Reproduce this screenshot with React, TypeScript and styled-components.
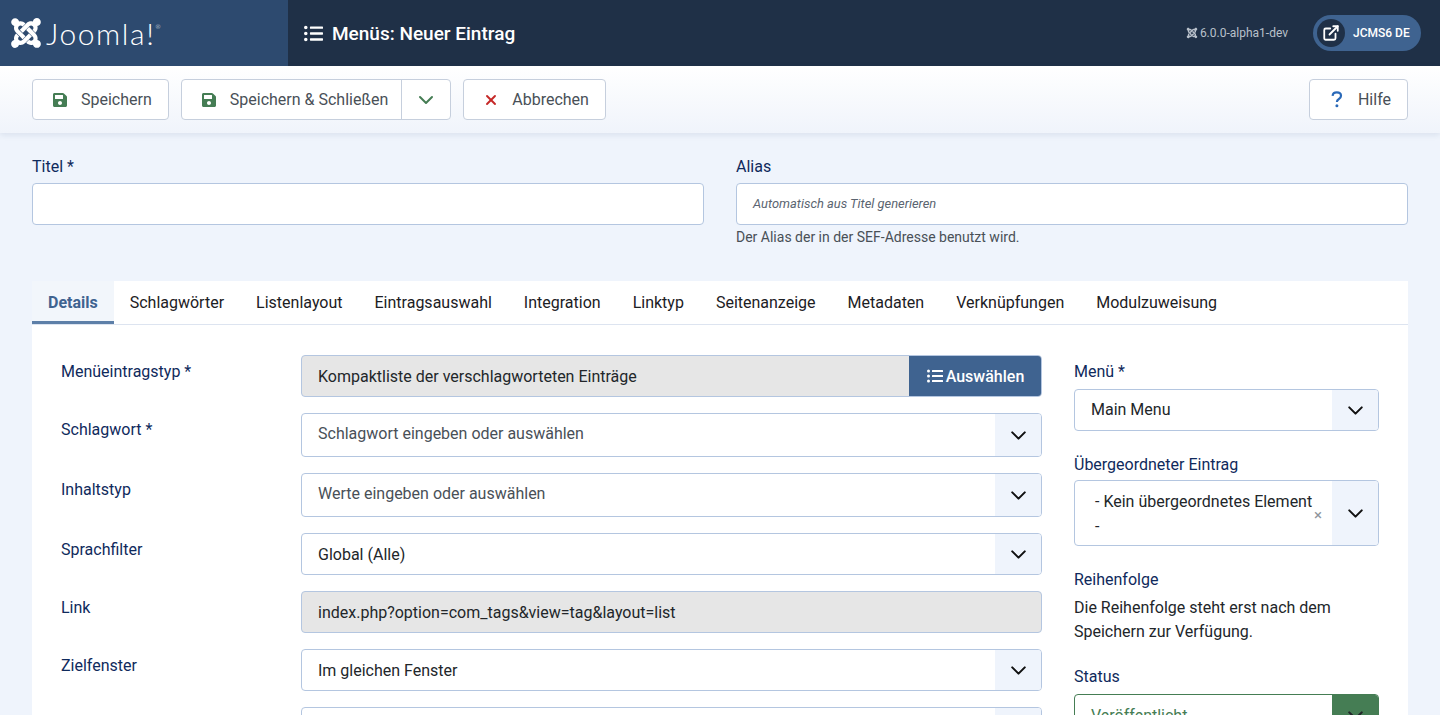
import { ReactNode } from 'react'

import styled, { createGlobalStyle } from 'styled-components'

import { FaJoomla, FaListUl, FaSave } from 'react-icons/fa'
import { ChevronDown, ExternalLink, X } from 'lucide-react'

const GlobalStyle = createGlobalStyle`
  html, body {
    margin: 0;
    height: 100%;
    overflow: hidden;
    background: #eff4fc;
    font-family: Roboto, "Liberation Sans", sans-serif;
    font-size: 16px;
    color: #22262a;
  }
  * {
    box-sizing: border-box;
  }
`

const Page = styled.div`
  height: 715px;
  overflow: hidden;
`
const Header = styled.header`
  display: flex;
  align-items: center;
  height: 66px;
  background: #1f3047;
  color: #fff;
`
const Brand = styled.div`
  display: flex;
  align-items: center;
  gap: 3px;
  width: 288px;
  height: 100%;
  padding-left: 9px;
  background: #2d4a6f;
`
const BrandName = styled.span`
  font-family: Lato, sans-serif;
  font-weight: 300;
  font-size: 30px;
  letter-spacing: 1.6px;
  sup {
    font-size: 6px;
    vertical-align: 16px;
    letter-spacing: 0;
  }
`
const PageTitle = styled.h1`
  display: flex;
  align-items: center;
  gap: 9px;
  flex: 1;
  margin: 0;
  padding-left: 16px;
  font-size: 19px;
  font-weight: 500;
`
const Version = styled.div`
  display: flex;
  align-items: center;
  gap: 2px;
  margin-right: 25px;
  font-size: 12px;
  color: #b9c1cb;
`
const SitePill = styled.div`
  display: flex;
  align-items: center;
  width: 108px;
  height: 36px;
  margin-right: 19px;
  padding-left: 4px;
  border-radius: 18px;
  background: #3f6390;
  font-size: 12px;
  font-weight: 500;
`
const SiteIcon = styled.span`
  display: flex;
  align-items: center;
  justify-content: center;
  width: 28px;
  height: 28px;
  margin-right: 8px;
  border-radius: 50%;
  background: #1f3047;
`
const Toolbar = styled.div`
  display: flex;
  align-items: center;
  gap: 12px;
  height: 67px;
  padding: 0 32px;
  background: linear-gradient(#fff, #f0f4fb);
  box-shadow: 0 2px 6px rgba(30, 60, 110, 0.1);
`
const ToolButton = styled.div`
  display: flex;
  align-items: center;
  height: 41px;
  background: #fff;
  border: 1px solid #c6cfdd;
  border-radius: 4px;
  color: #495057;
  font-size: 16px;
`
const ButtonPart = styled.span<{ $padRight?: number }>`
  display: flex;
  align-items: center;
  height: 100%;
  padding: 0 ${(p) => p.$padRight ?? 16}px 0 19px;
`
const ButtonIcon = styled.span<{ $color: string }>`
  display: flex;
  align-items: center;
  justify-content: center;
  width: 16px;
  margin-right: 13px;
  color: ${(p) => p.$color};
`
const CaretPart = styled.span`
  display: flex;
  align-items: center;
  justify-content: center;
  width: 49px;
  height: 100%;
  border-left: 1px solid #c6cfdd;
  color: #457d54;
`
const Spacer = styled.div`
  flex: 1;
`
const TitleRow = styled.div`
  display: grid;
  grid-template-columns: 672px 672px;
  gap: 32px;
  padding: 24px 32px 0;
  height: 148px;
`
const Label = styled.label`
  display: block;
  color: #0f2a5c;
  font-size: 16px;
  line-height: 19px;
`
const TopInput = styled.div`
  display: flex;
  align-items: center;
  height: 42px;
  margin-top: 7px;
  padding: 0 16px 2px;
  background: #fff;
  border: 1px solid #b4c6e0;
  border-radius: 4px;
  font-size: 12.9px;
  font-style: italic;
  color: #5a6470;
`
const Hint = styled.div`
  margin-top: 4px;
  font-size: 14px;
  line-height: 17px;
  color: #495057;
`
const Card = styled.section`
  margin: 0 32px;
  background: #fff;
`
const Tabs = styled.nav`
  display: flex;
  height: 44px;
  border-bottom: 1px solid #dde4f0;
`
const Tab = styled.div<{ $active?: boolean }>`
  display: flex;
  align-items: center;
  padding: 0 16px;
  font-size: 16px;
  font-weight: ${(p) => (p.$active ? 700 : 400)};
  color: ${(p) => (p.$active ? '#3f6390' : '#1c2024')};
  background: ${(p) => (p.$active ? '#f2f6fb' : 'transparent')};
  box-shadow: ${(p) => (p.$active ? 'inset 0 -3px 0 #5d7fa8' : 'none')};
`
const FormBody = styled.div`
  display: grid;
  grid-template-columns: 741px 305px;
  gap: 32px;
  padding: 30px 0 0 269px;
`
const FieldColumn = styled.div`
  display: flex;
  flex-direction: column;
`
const Row = styled.div<{ $height: number }>`
  display: flex;
  height: ${(p) => p.$height}px;
  margin-left: -240px;
`
const RowLabel = styled.div`
  flex: 0 0 240px;
  padding-top: 7px;
  color: #0f2a5c;
  font-size: 16px;
  line-height: 19px;
`
const Field = styled.div<{ $readOnly?: boolean; $height?: number; $muted?: boolean; $state?: string }>`
  display: flex;
  align-items: center;
  flex: 1 0 auto;
  height: ${(p) => p.$height ?? 42}px;
  background: ${(p) => (p.$readOnly ? '#e6e6e6' : '#fff')};
  border: 1px solid ${(p) => p.$state ?? '#b4c6e0'};
  border-radius: 4px;
  overflow: hidden;
  color: ${(p) => (p.$state ? p.$state : p.$muted ? '#495057' : '#22262a')};
  font-size: 16px;
`
const SideField = styled(Field)`
  flex: 0 0 auto;
`
const FieldText = styled.span<{ $raise?: number; $lower?: number }>`
  flex: 1;
  padding: ${(p) => p.$lower ?? 0}px 0 ${(p) => p.$raise ?? 0}px 16px;
`
const Caret = styled.span<{ $filled?: string }>`
  display: flex;
  align-items: center;
  justify-content: center;
  flex: 0 0 46px;
  height: 100%;
  background: ${(p) => p.$filled ?? '#eff4fc'};
  color: ${(p) => (p.$filled ? '#22262a' : '#111')};
`
const SelectButton = styled.div`
  display: flex;
  align-items: center;
  justify-content: center;
  gap: 3px;
  flex: 0 0 133px;
  height: 42px;
  margin: -1px;
  background: #3f6390;
  color: #fff;
  font-weight: 500;
  font-size: 16px;
  border-radius: 0 4px 4px 0;
`
const SideColumn = styled.aside`
  display: flex;
  flex-direction: column;
`
const SideLabel = styled(Label)<{ $top?: number; $bottom?: number }>`
  margin-top: ${(p) => p.$top ?? 0}px;
  margin-bottom: ${(p) => p.$bottom ?? 8}px;
`
const ParentText = styled.div`
  position: relative;
  flex: 1;
  padding: 2px 16px 0 20px;
  line-height: 25px;
`
const ClearMark = styled.span`
  position: absolute;
  right: 10px;
  top: 19px;
  color: #8f959c;
  font-size: 15px;
  line-height: 18px;
`
const Note = styled.p`
  margin: -1px 0 0;
  font-size: 16px;
  line-height: 24px;
  color: #22262a;
`

const tabs = [
  'Details',
  'Schlagwörter',
  'Listenlayout',
  'Eintragsauswahl',
  'Integration',
  'Linktyp',
  'Seitenanzeige',
  'Metadaten',
  'Verknüpfungen',
  'Modulzuweisung',
]

const QuestionIcon = () => (
  <svg width="12" height="17" viewBox="0 0 12 17" fill="none">
    <path
      d="M1.6 4.8C1.8 2.7 3.5 1.4 5.8 1.4c2.5 0 4.2 1.4 4.2 3.4 0 1.5-.8 2.4-2.1 3.2-1.3.8-2 1.5-2 3"
      stroke="currentColor"
      strokeWidth="2.2"
    />
    <circle cx="5.9" cy="14.8" r="1.5" fill="currentColor" />
  </svg>
)

type SelectRowProps = {
  label: string
  height: number
  fieldHeight?: number
  muted?: boolean
  children: ReactNode
}
const SelectRow = ({ label, height, fieldHeight, muted, children }: SelectRowProps) => (
  <Row $height={height}>
    <RowLabel>{label}</RowLabel>
    <Field $height={fieldHeight} $muted={muted}>
      <FieldText $raise={muted ? 4 : 0}>{children}</FieldText>
      <Caret>
        <ChevronDown size={25} strokeWidth={2} />
      </Caret>
    </Field>
  </Row>
)

export default function App() {
  return (
    <Page>
      <GlobalStyle />
      <Header>
        <Brand>
          <FaJoomla size={34} />
          <BrandName>
            Joomla!<sup>®</sup>
          </BrandName>
        </Brand>
        <PageTitle>
          <FaListUl size={19} />
          Menüs: Neuer Eintrag
        </PageTitle>
        <Version>
          <FaJoomla size={12} />
          6.0.0-alpha1-dev
        </Version>
        <SitePill>
          <SiteIcon>
            <ExternalLink size={18} strokeWidth={2.4} />
          </SiteIcon>
          JCMS6 DE
        </SitePill>
      </Header>
      <Toolbar>
        <ToolButton>
          <ButtonPart>
            <ButtonIcon $color="#457d54">
              <FaSave size={16} />
            </ButtonIcon>
            Speichern
          </ButtonPart>
        </ToolButton>
        <ToolButton>
          <ButtonPart $padRight={13}>
            <ButtonIcon $color="#457d54">
              <FaSave size={16} />
            </ButtonIcon>
            Speichern &amp; Schließen
          </ButtonPart>
          <CaretPart>
            <ChevronDown size={24} strokeWidth={2} />
          </CaretPart>
        </ToolButton>
        <ToolButton>
          <ButtonPart>
            <ButtonIcon $color="#c52827">
              <X size={20} strokeWidth={2.8} />
            </ButtonIcon>
            Abbrechen
          </ButtonPart>
        </ToolButton>
        <Spacer />
        <ToolButton>
          <ButtonPart>
            <ButtonIcon $color="#2a69b8">
              <QuestionIcon />
            </ButtonIcon>
            Hilfe
          </ButtonPart>
        </ToolButton>
      </Toolbar>
      <TitleRow>
        <div>
          <Label>Titel *</Label>
          <TopInput />
        </div>
        <div>
          <Label>Alias</Label>
          <TopInput>Automatisch aus Titel generieren</TopInput>
          <Hint>Der Alias der in der SEF-Adresse benutzt wird.</Hint>
        </div>
      </TitleRow>
      <Card>
        <Tabs>
          {tabs.map((tab, idx) => (
            <Tab key={tab} $active={idx === 0}>
              {tab}
            </Tab>
          ))}
        </Tabs>
        <FormBody>
          <FieldColumn>
            <Row $height={58}>
              <RowLabel>Menüeintragstyp *</RowLabel>
              <Field $readOnly>
                <FieldText $lower={1}>Kompaktliste der verschlagworteten Einträge</FieldText>
                <SelectButton>
                  <FaListUl size={16} />
                  Auswählen
                </SelectButton>
              </Field>
            </Row>
            <SelectRow label="Schlagwort *" height={60} fieldHeight={44} muted>
              Schlagwort eingeben oder auswählen
            </SelectRow>
            <SelectRow label="Inhaltstyp" height={60} fieldHeight={44} muted>
              Werte eingeben oder auswählen
            </SelectRow>
            <SelectRow label="Sprachfilter" height={58}>
              Global (Alle)
            </SelectRow>
            <Row $height={58}>
              <RowLabel>Link</RowLabel>
              <Field $readOnly>
                <FieldText>index.php?option=com_tags&amp;view=tag&amp;layout=list</FieldText>
              </Field>
            </Row>
            <SelectRow label="Zielfenster" height={58}>
              Im gleichen Fenster
            </SelectRow>
            <SelectRow label="" height={58}>
              {' '}
            </SelectRow>
          </FieldColumn>
          <SideColumn>
            <SideLabel $top={7}>Menü *</SideLabel>
            <SideField $height={42}>
              <FieldText $raise={2}>Main Menu</FieldText>
              <Caret>
                <ChevronDown size={25} strokeWidth={2} />
              </Caret>
            </SideField>
            <SideLabel $top={24} $bottom={6}>
              Übergeordneter Eintrag
            </SideLabel>
            <SideField $height={66}>
              <ParentText>
                - Kein übergeordnetes Element -<ClearMark>×</ClearMark>
              </ParentText>
              <Caret>
                <ChevronDown size={25} strokeWidth={2} />
              </Caret>
            </SideField>
            <SideLabel $top={24}>Reihenfolge</SideLabel>
            <Note>
              Die Reihenfolge steht erst nach dem
              <br />
              Speichern zur Verfügung.
            </Note>
            <SideLabel $top={23}>Status</SideLabel>
            <SideField $height={42} $state="#457d54">
              <FieldText>Veröffentlicht</FieldText>
              <Caret $filled="#457d54">
                <ChevronDown size={25} strokeWidth={2} />
              </Caret>
            </SideField>
          </SideColumn>
        </FormBody>
      </Card>
    </Page>
  )
}
